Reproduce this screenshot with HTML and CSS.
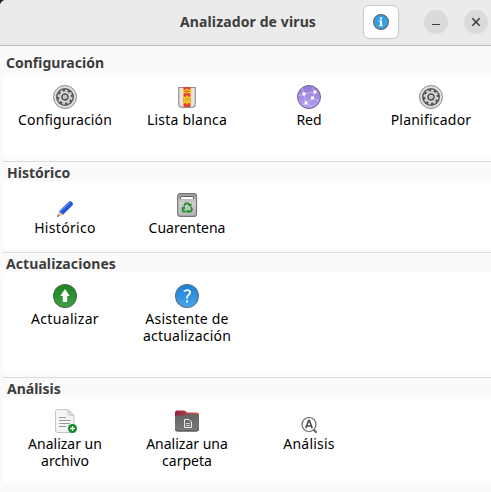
FILE: index.html
```html
<!DOCTYPE html>
<html lang="es">
<head>
<meta charset="utf-8">
<title>Analizador de virus</title>
<link rel="stylesheet" href="styles.css">
</head>
<body>
<svg class="defs" width="0" height="0">
  <defs>
    <linearGradient id="green" x2="0" y2="1"><stop stop-color="#198522"/><stop offset="1" stop-color="#3d9e46"/></linearGradient>
    <linearGradient id="blue" x2="0" y2="1"><stop stop-color="#1b7fd5"/><stop offset="1" stop-color="#48a6e9"/></linearGradient>
    <linearGradient id="violet" x2="0" y2="1"><stop stop-color="#9279d5"/><stop offset="1" stop-color="#b7a3f5"/></linearGradient>
    <linearGradient id="red" x2="1"><stop stop-color="#8d2142"/><stop offset="1" stop-color="#d95a3f"/></linearGradient>
    <linearGradient id="folder" x2="0" y2="1"><stop stop-color="#656263"/><stop offset="1" stop-color="#7b7979"/></linearGradient>
    <linearGradient id="gray" x2="0" y2="1"><stop stop-color="#9d9d9d"/><stop offset=".4" stop-color="#cecece"/><stop offset="1" stop-color="#b5b5b5"/></linearGradient>
    <symbol id="gear" viewBox="0 0 24 24">
      <circle cx="12" cy="12" r="11.5" fill="#dedede" stroke="#8b8b8b"/>
      <circle cx="12" cy="12" r="9" fill="#585858"/>
      <circle cx="12" cy="12" r="6.6" fill="none" stroke="#d9d9d9" stroke-width="1.8" stroke-dasharray="2.6 2.58"/>
      <circle cx="12" cy="12" r="4.8" fill="#696969" stroke="#dedede" stroke-width="2"/>
      <circle cx="12" cy="12" r="2.8" fill="#d6d6d6" stroke="#555" stroke-width="1.3"/>
      <path d="M12 12h2.6M12 12l-1.3-2.3M12 12l-1.3 2.3" stroke="#bbb" stroke-width="1"/>
    </symbol>
  </defs>
</svg>
<div class="window">
  <header class="titlebar">
    <h1 class="title">Analizador de virus</h1>
    <button class="about" aria-label="Acerca de">
      <svg width="16" height="16" viewBox="0 0 16 16"><circle cx="8" cy="8" r="7.4" fill="#35a2e7" stroke="#626a70" stroke-width="1.2"/><path d="M7 3.6h2v2H7zM6 6.6h3v4.6h1v1H6v-1h1V7.6H6z" fill="#fff"/></svg>
    </button>
    <button class="control minimize" aria-label="Minimizar">
      <svg width="10" height="10" viewBox="0 0 10 10"><path d="M1 7.5h8" stroke="#3b3b3b"/></svg>
    </button>
    <button class="control close" aria-label="Cerrar">
      <svg width="10" height="10" viewBox="0 0 10 10"><path d="M1.3 1.3l7.4 7.4M8.7 1.3L1.3 8.7" stroke="#3b3b3b" stroke-width="1.5"/></svg>
    </button>
  </header>
  <main>
    <section class="group config">
      <h2 class="heading">Configuración</h2>
      <div class="panel">
        <div class="item"><svg class="icon"><use href="#gear"/></svg><span class="label wide">Configuración</span></div>
        <div class="item">
          <svg class="icon" viewBox="0 0 24 24"><path d="M3.700 2.500h16.600v16q0 4-4 4H7.700q-4 0-4-4z" fill="#e4e4e4" stroke="#929292" stroke-width="1.200"/><path d="M8.500 2h7v20h-7z" fill="#ed3c31"/><path d="M7.500 4l2 1.200L12 3.400l2.500 1.800 2-1.200v4.300h-9z" fill="#f4d81a"/><path d="M9 6.500h6M12 4.700v3" stroke="#e45a25"/><path d="M7.500 10.500l2.800 1.500 1.700-2 1.700 2 2.800-1.500-2 4.200 2 4.300-3.300-1.200L12 20l-1.200-2.200L7.500 19l2-4.300z" fill="#f2cd1c"/><path d="M11 12.500l2 2-2 2" stroke="#d97920" fill="none"/></svg>
          <span class="label wider">Lista blanca</span>
        </div>
        <div class="item">
          <svg class="icon" viewBox="0 0 24 24"><circle cx="12" cy="12" r="11.5" fill="url(#violet)" stroke="#6e6290"/><path d="M1 11l6-2 11-2-2 6-7 5L7 9 5 3M18 7l-3-5M16 13l6 3M9 18l-4 2M9 18l6 4" fill="none" stroke="#c9bef4" stroke-width=".8"/><path d="M5.500 7.500h3v3h-3zM16.500 5.500h3v3h-3zM14 11.500h3v3h-3zM7.500 16.500h3v3h-3z" fill="#fff"/></svg>
          <span class="label">Red</span>
        </div>
        <div class="item"><svg class="icon"><use href="#gear"/></svg><span class="label wider">Planificador</span></div>
      </div>
    </section>
    <section class="group history">
      <h2 class="heading">Histórico</h2>
      <div class="panel">
        <div class="item">
          <svg class="icon" viewBox="0 0 24 24"><path d="M4 24l2-6 4 4z" fill="#ecc4a2"/><path d="M4 24l.9-2.400 1.500 1.500z" fill="#555"/><path d="M6 18.200L16 8.600q2-1 3.600 1.100 1 1.200-.1 2.500L10 21.800z" fill="#2457d6"/><path d="M7.300 18.200L16.700 9.400" stroke="#5d89f2" stroke-width="1.400"/></svg>
          <span class="label widest">Histórico</span>
        </div>
        <div class="item">
          <svg class="icon" viewBox="0 0 24 24"><rect x="2.700" y=".7" width="18.800" height="22.600" rx="2.500" fill="url(#gray)" stroke="#777" stroke-width="1.200"/><path d="M5.500 6V3.500h13V6" fill="#f5f5f5" stroke="#606060"/><path d="M7 5h10" stroke="#fff" stroke-width="1.500"/><g fill="none" stroke="#229426" stroke-width="1.800"><path d="M9 12.800l1.500-2.300h3l1.300 2"/><path d="M16 14l1 2.500-1.200 2H12.500"/><path d="M10.700 18.500H8.400l-1-2L8.600 14"/></g><path d="M13 13l3.400.4.300-3.200zM13.300 16.400v3.800L11 18.300zM6.600 14.200l3.400-.7.300 3z" fill="#229426"/></svg>
          <span class="label">Cuarentena</span>
        </div>
      </div>
    </section>
    <section class="group updates">
      <h2 class="heading">Actualizaciones</h2>
      <div class="panel">
        <div class="item">
          <svg class="icon" viewBox="0 0 24 24"><circle cx="12" cy="12" r="11.400" fill="url(#green)" stroke="#4b704f" stroke-width="1.200"/><path d="M12 5l4.700 7h-2.500v6H9.800v-6H7.300z" fill="#fff"/></svg>
          <span class="label widest">Actualizar</span>
        </div>
        <div class="item">
          <svg class="icon" viewBox="0 0 24 24"><circle cx="12" cy="12" r="11.400" fill="url(#blue)" stroke="#52758f" stroke-width="1.200"/><path d="M8.800 7.400Q12 5.200 14.200 6.600q1.800 1.600.1 3.600l-1.600 1.700q-.8.9-.7 2.700" fill="none" stroke="#fff" stroke-width="1.700"/><path d="M11 16.500h2v2h-2z" fill="#fff"/></svg>
          <span class="label wider">Asistente de<br>actualización</span>
        </div>
      </div>
    </section>
    <section class="group analysis">
      <h2 class="heading">Análisis</h2>
      <div class="panel">
        <div class="item">
          <svg class="icon" viewBox="0 0 24 24"><path d="M4.500 .5H15l6 6v15q0 2-2 2H4.500q-2 0-2-2v-19q0-2 2-2z" fill="#f4f4f4" stroke="#c6c6c6"/><path d="M15 .5v4q0 2 2 2h4z" fill="#dedede" stroke="#c6c6c6" stroke-width=".7"/><path d="M6 8.500h7M6 11.500h12M6 14.500h11M6 17.500h7" stroke="#999"/><circle cx="19.500" cy="19.500" r="4.500" fill="#128a23"/><path d="M17 19.500h5M19.500 17v5" stroke="#fff" stroke-width="1.300"/></svg>
          <span class="label">Analizar un<br>archivo</span>
        </div>
        <div class="item">
          <svg class="icon" viewBox="0 0 24 24"><path d="M2 1.500h7q1.500 0 2.300 1.500l.7.500h9.500Q24 3.500 24 6v8H0V3.500q0-2 2-2z" fill="url(#red)"/><path d="M0 8q0-1.500 2-1.500h7.500q1 0 1.700-.9.600-.6 1.600-.6H22q2 0 2 2v13.500q0 2-2 2H2q-2 0-2-2z" fill="url(#folder)"/><path d="M.5 20q.2 2 2 2h19q1.800 0 2-2" fill="none" stroke="#525051"/><path d="M9.500 10.500h4.500l2.500 2.500v5.500h-7z" fill="none" stroke="#eee"/><path d="M11 14.500h4M11 16.500h4" stroke="#ddd" stroke-width=".9"/></svg>
          <span class="label">Analizar una<br>carpeta</span>
        </div>
        <div class="item">
          <svg class="icon" viewBox="0 0 24 24"><path d="M16.500 20.500l2.500 2.500" stroke="#666761" stroke-width="2.200" stroke-linecap="round"/><circle cx="12" cy="15.500" r="7" fill="#fff" stroke="#666761" stroke-width="1.200"/><path d="M8.800 19.200L11.600 11.500h.8l2.800 7.700M10 17h4" fill="none" stroke="#484944" stroke-width="1.600"/></svg>
          <span class="label wider">Análisis</span>
        </div>
      </div>
    </section>
  </main>
</div>
</body>
</html>
```
FILE: styles.css
```css
* { box-sizing: border-box; }
html { background: #222; }
body { margin: 0; overflow: hidden; font-family: "Noto Sans", sans-serif; }
.defs { display: block; }
.window { height: 492px; background: #fafafa; border-top-left-radius: 6px; overflow: hidden; }
.titlebar { display: flex; align-items: center; height: 46px; padding: 0 3px 2px 0; background: #ebebeb; border-bottom: 1px solid #bdbdbd; }
.title { margin: 0 auto 0 180px; font-size: 14px; line-height: 20px; font-weight: 700; color: #3d3d3d; white-space: nowrap; letter-spacing: 0.12px; }
button { display: flex; align-items: center; justify-content: center; padding: 0; border: 0; }
.about { width: 36px; height: 34px; margin-right: 25px; background: #fff; border: 1px solid #c9c9c9; border-radius: 6px; }
.control { width: 24px; height: 24px; border-radius: 50%; background: #dadada; }
.minimize { margin-right: 16px; }
.group { padding-left: 3px; }
.group + .group { position: relative; }
.group + .group::before { content: ""; position: absolute; top: 0; left: 3px; right: 0; height: 1px; background: #dadada; }
.config { height: 115px; padding-top: 7px; }
.history { height: 91px; }
.updates { height: 125px; }
.analysis { height: 115px; }
.heading { margin: 0; padding-left: 4px; height: 20px; font-size: 14px; line-height: 24px; font-weight: 700; color: #3d3d3d; white-space: nowrap; }
.config .heading, .updates .heading { padding-left: 3px; }
.config .heading { line-height: 20px; }
.updates .heading { letter-spacing: 0.08px; }
.panel { display: flex; padding: 12px 0 0 1px; background: #fff; border-radius: 6px 0 0 6px; }
.config .panel { height: 86px; }
.history .panel { height: 69px; }
.updates .panel { height: 103px; }
.analysis .panel { height: 86px; }
.item { flex: 0 0 122px; display: flex; flex-direction: column; align-items: center; }
.icon { width: 24px; height: 24px; flex: none; }
.label { margin-top: 2px; font-size: 14px; line-height: 17px; text-align: center; color: #000; white-space: nowrap; }
.wide { letter-spacing: 0.1px; }
.wider { letter-spacing: 0.22px; }
.widest { letter-spacing: 0.32px; }
```
